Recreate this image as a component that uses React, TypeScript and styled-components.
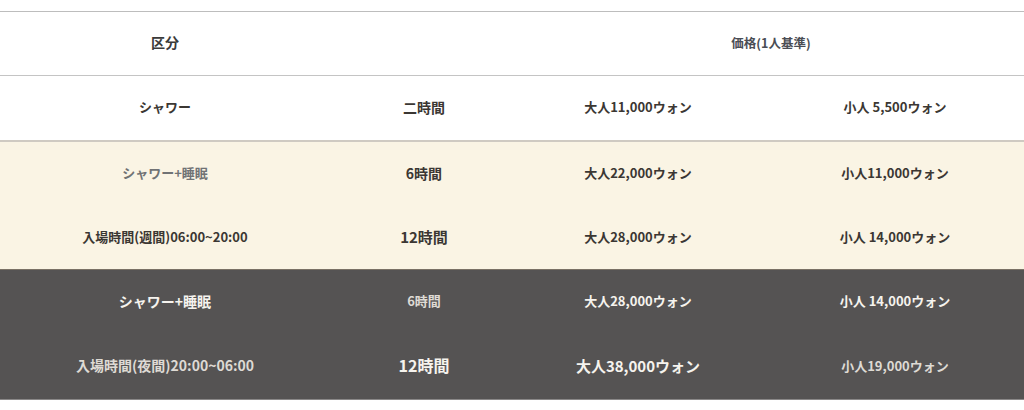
import React from 'react'
import styled, { createGlobalStyle } from 'styled-components'

const GlobalStyle = createGlobalStyle`
  body {
    margin: 0;
    background: #fff;
    font-family: "Noto Sans CJK JP", "Noto Sans", sans-serif;
  }
`

type Tone = 'light' | 'cream' | 'dark'

const bg: Record<Tone, string> = {
  light: '#ffffff',
  cream: '#faf4e4',
  dark: '#555353',
}

const Page = styled.div`
  padding-top: 11px;
`

const Table = styled.div`
  display: grid;
  grid-template-columns: 330px 188px 240px 1fr;
  border-top: 1px solid #bdbdbd;
  border-bottom: 1px solid #8a8888;
`

const Section = styled.div<{ $tone: Tone; $line?: string }>`
  grid-column: 1 / -1;
  display: grid;
  grid-template-columns: subgrid;
  background: ${(p) => bg[p.$tone]};
  border-bottom: ${(p) => (p.$line ? p.$line : 'none')};

  & > :nth-child(4n) {
    padding-left: 8px;
  }
`

const Cell = styled.div<{ $size?: number; $color?: string; $span?: number; $h?: number }>`
  grid-column: span ${(p) => p.$span || 1};
  height: ${(p) => p.$h || 64}px;
  display: flex;
  align-items: center;
  justify-content: center;
  padding-bottom: 3px;
  box-sizing: border-box;
  font-size: ${(p) => p.$size || 13}px;
  font-weight: 700;
  color: ${(p) => p.$color || '#3b3733'};
  white-space: nowrap;
`

const ink = '#3b3733'
const soft = '#707274'
const white = '#f6f3ee'
const pale = '#dedad4'

const App = () => (
  <>
    <GlobalStyle />
    <Page>
      <Table>
        <Section $tone="light" $line="1px solid #c4c4c4">
          <Cell $h={63} $size={14} $color="#3a3a3a">区分</Cell>
          <Cell $h={63} />
          <Cell $h={63} $span={2} $size={12.5} $color="#4a4d54">価格(1人基準)</Cell>
        </Section>
        <Section $tone="light" $line="2px solid #cfcac2">
          <Cell $color={ink}>シャワー</Cell>
          <Cell $size={14} $color={ink}>二時間</Cell>
          <Cell $color={ink}>大人11,000ウォン</Cell>
          <Cell $color={ink}>小人 5,500ウォン</Cell>
        </Section>
        <Section $tone="cream" $line="1px solid #7a7165">
          <Cell $color={soft}>シャワー+睡眠</Cell>
          <Cell $size={14} $color={ink}>6時間</Cell>
          <Cell $color={ink}>大人22,000ウォン</Cell>
          <Cell $color={ink}>小人11,000ウォン</Cell>
          <Cell $h={63} $color={ink}>入場時間(週間)06:00~20:00</Cell>
          <Cell $h={63} $size={15} $color={ink}>12時間</Cell>
          <Cell $h={63} $color={ink}>大人28,000ウォン</Cell>
          <Cell $h={63} $color={ink}>小人 14,000ウォン</Cell>
        </Section>
        <Section $tone="dark">
          <Cell $size={14} $color={white}>シャワー+睡眠</Cell>
          <Cell $color={pale}>6時間</Cell>
          <Cell $color={white}>大人28,000ウォン</Cell>
          <Cell $color={white}>小人 14,000ウォン</Cell>
          <Cell $h={65} $size={14} $color={pale}>入場時間(夜間)20:00~06:00</Cell>
          <Cell $h={65} $size={16} $color={white}>12時間</Cell>
          <Cell $h={65} $size={15} $color={white}>大人38,000ウォン</Cell>
          <Cell $h={65} $color={pale}>小人19,000ウォン</Cell>
        </Section>
      </Table>
    </Page>
  </>
)

export default App
